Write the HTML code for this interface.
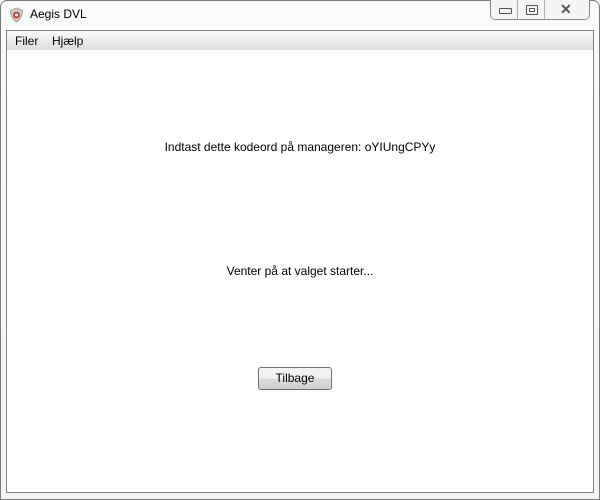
<!DOCTYPE html>
<html><head><style>
body{margin:0;width:600px;height:500px;overflow:hidden;background:#fff;font-family:"Liberation Sans",sans-serif;font-size:12px;color:#000;position:relative}
.frame{position:absolute;left:0;top:0;width:598px;height:498px;border:1px solid #7a7a7a;border-radius:7px 7px 0 0;background:linear-gradient(#fafafa,#f3f3f3)}
.client{position:absolute;left:6px;top:30px;width:586px;height:461px;border:1px solid #838383;background:#fff}
.menu{position:absolute;left:0;top:0;width:586px;height:19px;background:linear-gradient(#fafafa,#e8e8ea 60%,#dcdde0);}
.menu span{position:absolute;top:3px}
.title{position:absolute;left:30px;top:7px;font-size:12px}
.btns{position:absolute;left:490px;top:0;width:98px;height:19px;border:1px solid #8a8a8a;border-top:none;border-radius:0 0 5px 5px;background:#f4f4f4}
.sep{position:absolute;top:0;width:1px;height:19px;background:#b0b0b0}
.btn{position:absolute;left:258px;top:367px;width:72px;height:21px;border:1px solid #707070;border-radius:3px;background:linear-gradient(#f2f2f2 50%,#dddddd 50%,#cfcfcf);text-align:center;line-height:21px}
</style></head><body>
<div class="frame"></div>
<svg style="position:absolute;left:9px;top:7px" width="15" height="16" viewBox="0 0 15 16"><path d="M7.5 1 L13.5 3.5 Q13.5 11 7.5 15 Q1.5 11 1.5 3.5Z" fill="#c9c9c9" stroke="#999" stroke-width=".8"/><circle cx="7.5" cy="8" r="3.3" fill="#c0392b"/><circle cx="7.5" cy="8" r="1.5" fill="#fff"/></svg>
<div class="title">Aegis DVL</div>
<div class="btns"><div class="sep" style="left:26px"></div><div class="sep" style="left:53px"></div>
<div style="position:absolute;left:8px;top:8px;width:11px;height:4px;border:1px solid #555;border-radius:1px"></div>
<div style="position:absolute;left:35px;top:5px;width:10px;height:8px;border:1px solid #555;border-radius:1px"><div style="margin:2px;width:4px;height:2px;border:1px solid #555"></div></div>
<div style="position:absolute;left:69px;top:1px;font-size:14px;color:#555;font-weight:bold">✕</div></div>
<div class="client">
<div class="menu"><span style="left:8px">Filer</span><span style="left:45px">Hjælp</span></div>
</div>
<div style="position:absolute;left:0;width:600px;top:140px;text-align:center;">Indtast dette kodeord på manageren: oYIUngCPYy</div>
<div style="position:absolute;left:0;width:600px;top:264px;text-align:center;">Venter på at valget starter...</div>
<div class="btn">Tilbage</div>
</body></html>
